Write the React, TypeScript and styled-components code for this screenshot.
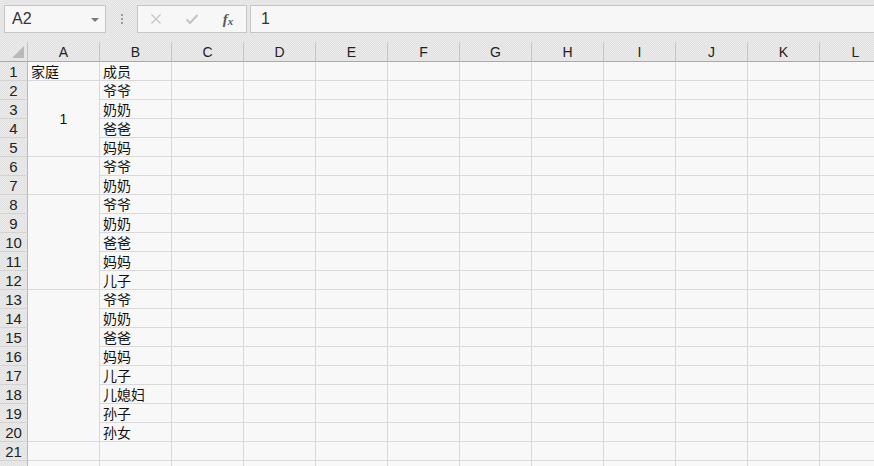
import React from 'react';
import styled, { createGlobalStyle } from 'styled-components';

// Sheet geometry
const ROW_HEADER_W = 28;
const COL_W = 72;
const ROW_H = 19;
const COLUMNS = ['A', 'B', 'C', 'D', 'E', 'F', 'G', 'H', 'I', 'J', 'K', 'L'];
const ROW_COUNT = 22;
const LAST_NUMBERED_ROW = 21;

const MEMBERS = [
    '成员', '爷爷', '奶奶', '爸爸', '妈妈', '爷爷', '奶奶', '爷爷', '奶奶', '爸爸',
    '妈妈', '儿子', '爷爷', '奶奶', '爸爸', '妈妈', '儿子', '儿媳妇', '孙子', '孙女',
];

// merged blocks in column A: [first row, row span, value]
const FAMILY_BLOCKS: [number, number, string][] = [
    [1, 1, '家庭'],
    [2, 4, '1'],
    [6, 2, ''],
    [8, 5, ''],
    [13, 8, ''],
    [21, 1, ''],
    [22, 1, ''],
];

const dither = `
    background-color: #e6e6e6;
    background-image: repeating-conic-gradient(#e2e2e2 0 25%, #eaeaea 0 50%);
    background-size: 2px 2px;
`;

const GlobalStyle = createGlobalStyle`
    html, body {
        margin: 0;
        padding: 0;
        overflow: hidden;
        background: #f8f8f8;
    }
`;

const Page = styled.div`
    width: 874px;
    height: 466px;
    overflow: hidden;
    display: flex;
    flex-direction: column;
    font-family: "Liberation Sans", "Noto Sans CJK SC", sans-serif;
    color: #222;
`;

const Toolbar = styled.div`
    ${dither}
    height: 42px;
    flex: none;
    display: flex;
    align-items: flex-start;
    padding: 5px 0 0 4px;
    box-sizing: border-box;
`;

const NameBox = styled.div`
    width: 102px;
    height: 28px;
    box-sizing: border-box;
    border: 1px solid #c6c6c6;
    background: #f7f7f7;
    display: flex;
    align-items: center;
    justify-content: space-between;
    padding: 0 6px 0 7px;
    font-size: 16px;
    color: #333;
`;

const DropArrow = styled.span`
    width: 0;
    height: 0;
    border-left: 4px solid transparent;
    border-right: 4px solid transparent;
    border-top: 4px solid #7a7a7a;
    margin-top: 1px;
`;

const Grip = styled.div`
    width: 31px;
    height: 28px;
    display: flex;
    flex-direction: column;
    align-items: center;
    justify-content: center;
    gap: 2px;
`;

const GripDot = styled.span`
    width: 2px;
    height: 2px;
    background: #9a9a9a;
`;

const FxBox = styled.div`
    width: 110px;
    height: 28px;
    box-sizing: border-box;
    border: 1px solid #c6c6c6;
    background: #f7f7f7;
    display: flex;
    align-items: center;
`;

const FxButton = styled.span<{ $muted?: boolean }>`
    width: 36px;
    display: flex;
    justify-content: center;
    align-items: center;
    color: ${p => (p.$muted ? '#c4c4c4' : '#5a5a5a')};
    font-family: "Liberation Serif", serif;
    font-style: italic;
    font-weight: bold;
    font-size: 15px;
`;

const FxSub = styled.span`
    font-size: 11px;
    margin-top: 4px;
`;

const FormulaInput = styled.div`
    flex: 1;
    height: 28px;
    margin-left: 3px;
    margin-right: -2px;
    box-sizing: border-box;
    border: 1px solid #c6c6c6;
    background: #f7f7f7;
    display: flex;
    align-items: center;
    padding-left: 10px;
    font-size: 16px;
    color: #333;
`;

const Sheet = styled.div`
    flex: 1;
    display: grid;
    grid-template-columns: ${ROW_HEADER_W}px repeat(${COLUMNS.length}, ${COL_W}px);
    grid-template-rows: 20px;
    grid-auto-rows: ${ROW_H}px;
    overflow: hidden;
    background: #f8f8f8;
`;

const Corner = styled.div`
    ${dither}
    grid-column: 1;
    grid-row: 1;
    box-sizing: border-box;
    border-right: 1px solid #c3c3c3;
    border-bottom: 1px solid #a9a9a9;
    position: relative;
    &::after {
        content: '';
        position: absolute;
        right: 3px;
        bottom: 3px;
        width: 0;
        height: 0;
        border-left: 12px solid transparent;
        border-bottom: 12px solid #b9b9b9;
    }
`;

const ColHeader = styled.div<{ $col: number }>`
    ${dither}
    grid-column: ${p => p.$col};
    grid-row: 1;
    box-sizing: border-box;
    border-right: 1px solid #c6c6c6;
    border-bottom: 1px solid #a9a9a9;
    display: flex;
    align-items: center;
    justify-content: center;
    font-size: 14px;
    color: #222;
`;

const RowHeader = styled.div<{ $row: number }>`
    ${dither}
    grid-column: 1;
    grid-row: ${p => p.$row};
    box-sizing: border-box;
    border-right: 1px solid #b8b8b8;
    border-bottom: 1px solid #d3d3d3;
    display: flex;
    align-items: center;
    justify-content: center;
    font-size: 15px;
    color: #222;
`;

const Cell = styled.div<{ $row: number; $col: number; $span?: number; $center?: boolean }>`
    grid-column: ${p => p.$col};
    grid-row: ${p => p.$row} / span ${p => p.$span ?? 1};
    box-sizing: border-box;
    border-right: 1px solid #d9d9d9;
    border-bottom: 1px solid #d9d9d9;
    background: #f8f8f8;
    display: flex;
    align-items: center;
    justify-content: ${p => (p.$center ? 'center' : 'flex-start')};
    padding-left: ${p => (p.$center ? 0 : 3)}px;
    font-family: "Liberation Sans", "Noto Sans CJK SC", sans-serif;
    font-size: 14px;
    color: #111;
    white-space: nowrap;
    overflow: hidden;
`;

const CrossIcon = () => (
    <svg width="12" height="12" viewBox="0 0 12 12">
        <path d="M1.5 1.5 L10.5 10.5 M10.5 1.5 L1.5 10.5" stroke="currentColor" strokeWidth="1.3" fill="none" />
    </svg>
);

const CheckIcon = () => (
    <svg width="14" height="12" viewBox="0 0 14 12">
        <path d="M1.5 6.5 L5 10 L12.5 2" stroke="currentColor" strokeWidth="2" fill="none" />
    </svg>
);

export default function App() {
    const rows = Array.from({ length: ROW_COUNT }, (_, i) => i + 1);

    return (
        <Page>
            <GlobalStyle />
            <Toolbar>
                <NameBox>
                    A2
                    <DropArrow />
                </NameBox>
                <Grip>
                    <GripDot />
                    <GripDot />
                    <GripDot />
                </Grip>
                <FxBox>
                    <FxButton $muted><CrossIcon /></FxButton>
                    <FxButton $muted><CheckIcon /></FxButton>
                    <FxButton>f<FxSub>x</FxSub></FxButton>
                </FxBox>
                <FormulaInput>1</FormulaInput>
            </Toolbar>

            <Sheet>
                <Corner />
                {COLUMNS.map((c, i) => (
                    <ColHeader key={c} $col={i + 2}>{c}</ColHeader>
                ))}

                {rows.map(r => (
                    <RowHeader key={`h${r}`} $row={r + 1}>
                        {r <= LAST_NUMBERED_ROW ? r : ''}
                    </RowHeader>
                ))}

                {/* column A: merged family blocks */}
                {FAMILY_BLOCKS.map(([start, span, value]) => (
                    <Cell
                        key={`a${start}`}
                        $row={start + 1}
                        $col={2}
                        $span={span}
                        $center={span > 1}
                    >
                        {value}
                    </Cell>
                ))}

                {/* columns B..L */}
                {rows.map(r =>
                    COLUMNS.slice(1).map((c, ci) => (
                        <Cell key={`${c}${r}`} $row={r + 1} $col={ci + 3}>
                            {c === 'B' ? MEMBERS[r - 1] ?? '' : ''}
                        </Cell>
                    ))
                )}
            </Sheet>
        </Page>
    );
}
